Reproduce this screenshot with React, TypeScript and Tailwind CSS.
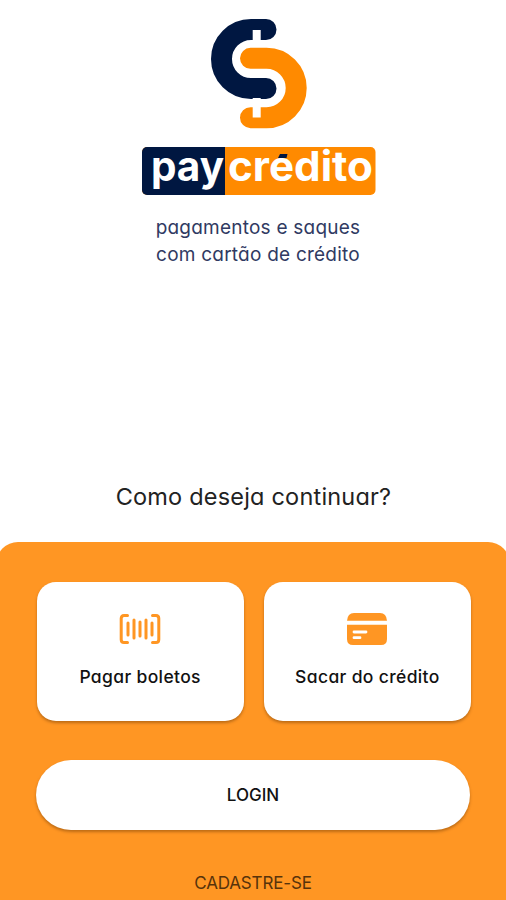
import React from "react";

function Logo() {
  return (
    <svg width="96" height="110" viewBox="211 19 96 110" fill="none" aria-hidden="true">
      <g strokeWidth="21" strokeLinecap="round">
        <path stroke="#001741" d="M266 29.5H251A29.5 29.5 0 0 0 251 88.5H266" />
        <path stroke="#ff8a00" d="M250.5 58.3H266.5A29.6 29.6 0 0 1 266.5 117.7H250.5" />
      </g>
      <path fill="#fff" d="M252.7 30H260.7V41H252.7ZM252.7 98H260.7V117.5H252.7Z" />
    </svg>
  );
}

function Wordmark() {
  return (
    <svg width="234" height="66" viewBox="142 138 234 66" role="img" aria-label="paycrédito">
      <rect x="142" y="147" width="233.5" height="48" rx="5" fill="#ff8a00" />
      <path fill="#001741" d="M225 147V195H147A5 5 0 0 1 142 190V152A5 5 0 0 1 147 147Z" />
      <g fill="#fff" fontSize="41" fontWeight="700" className="font-['Inter',sans-serif] [font-feature-settings:normal]">
        <text x="151" y="181" textLength="73" lengthAdjust="spacingAndGlyphs">pay</text>
        <text x="228" y="181" textLength="145" lengthAdjust="spacingAndGlyphs">crédito</text>
      </g>
      <path fill="#ff8a00" d="M276 148H291.5V157.5H276Z" />
      <path fill="#001741" d="M280 154H287.5L286.5 158H278Z" />
    </svg>
  );
}

function BarcodeIcon() {
  return (
    <svg width="42" height="32" viewBox="0 0 42 32" fill="none" stroke="#ff9623" strokeLinecap="round" aria-hidden="true">
      <path strokeWidth="3" d="M8.5 2.5H5Q2.2 2.5 2.2 5.5V26.5Q2.2 29.5 5 29.5H8.5M33.5 2.5H37Q39.8 2.5 39.8 5.5V26.5Q39.8 29.5 37 29.5H33.5" />
      <path strokeWidth="3" d="M9 10V22M15 7V25M21 9V23M27 7V25M33 10V22" />
    </svg>
  );
}

function CardIcon() {
  return (
    <svg width="42" height="32" viewBox="0 0 42 32" aria-hidden="true">
      <path fill="#ff9623" d="M1 7.7Q1.5 0 8 0H34Q40.5 0 41 7.7Z" />
      <path fill="#ff9623" d="M1 11.7H41V26Q41 32 35 32H7Q1 32 1 26Z" />
      <path stroke="#fff" strokeWidth="2.8" strokeLinecap="round" d="M8 19H20M8 24.7H14" />
    </svg>
  );
}

function OptionCard({ icon, children }: { icon: React.ReactNode; children: React.ReactNode }) {
  return (
    <button className="flex h-[139px] flex-1 flex-col items-center rounded-[19px] bg-white pt-[31px] shadow-[0_2px_3px_rgba(90,45,0,0.4)]">
      {icon}
      <span className="mt-5 whitespace-nowrap text-[17.5px] font-medium leading-6 tracking-[0.35px]">{children}</span>
    </button>
  );
}

export default function App() {
  return (
    <main className="flex h-[900px] w-full flex-col overflow-hidden bg-white font-['Inter','Open_Sans',sans-serif] text-[#111] [font-feature-settings:'cv11']">
      <header className="flex h-[477px] flex-col items-center pt-[19px]">
        <div className="pl-3"><Logo /></div>
        <div className="mt-[9px] pl-3"><Wordmark /></div>
        <p className="mt-[10px] whitespace-nowrap pl-[10px] text-center text-[19px] leading-[27px] tracking-[0.23px] text-[#303a62]">
          pagamentos e saques<br />com cartão de crédito
        </p>
      </header>
      <h1 className="h-[65px] whitespace-nowrap pl-px text-center text-[23.5px] font-normal leading-10 tracking-[0.2px] text-[#222]">Como deseja continuar?</h1>
      <section className="-mx-1 flex flex-1 flex-col rounded-t-[22px] bg-[#ff9623] px-10 pt-10">
        <div className="-mr-px ml-[0.5px] flex gap-5">
          <OptionCard icon={<BarcodeIcon />}>Pagar boletos</OptionCard>
          <OptionCard icon={<CardIcon />}>Sacar do crédito</OptionCard>
        </div>
        <button className="mt-[39px] h-[70px] w-[434px] rounded-full bg-white pt-0.5 text-[17px] font-medium shadow-[0_2px_3px_rgba(90,45,0,0.4)]">LOGIN</button>
        <a className="mt-[41px] text-center text-[17px] leading-6 tracking-[-0.15px] text-[#57330b]">CADASTRE-SE</a>
      </section>
    </main>
  );
}
